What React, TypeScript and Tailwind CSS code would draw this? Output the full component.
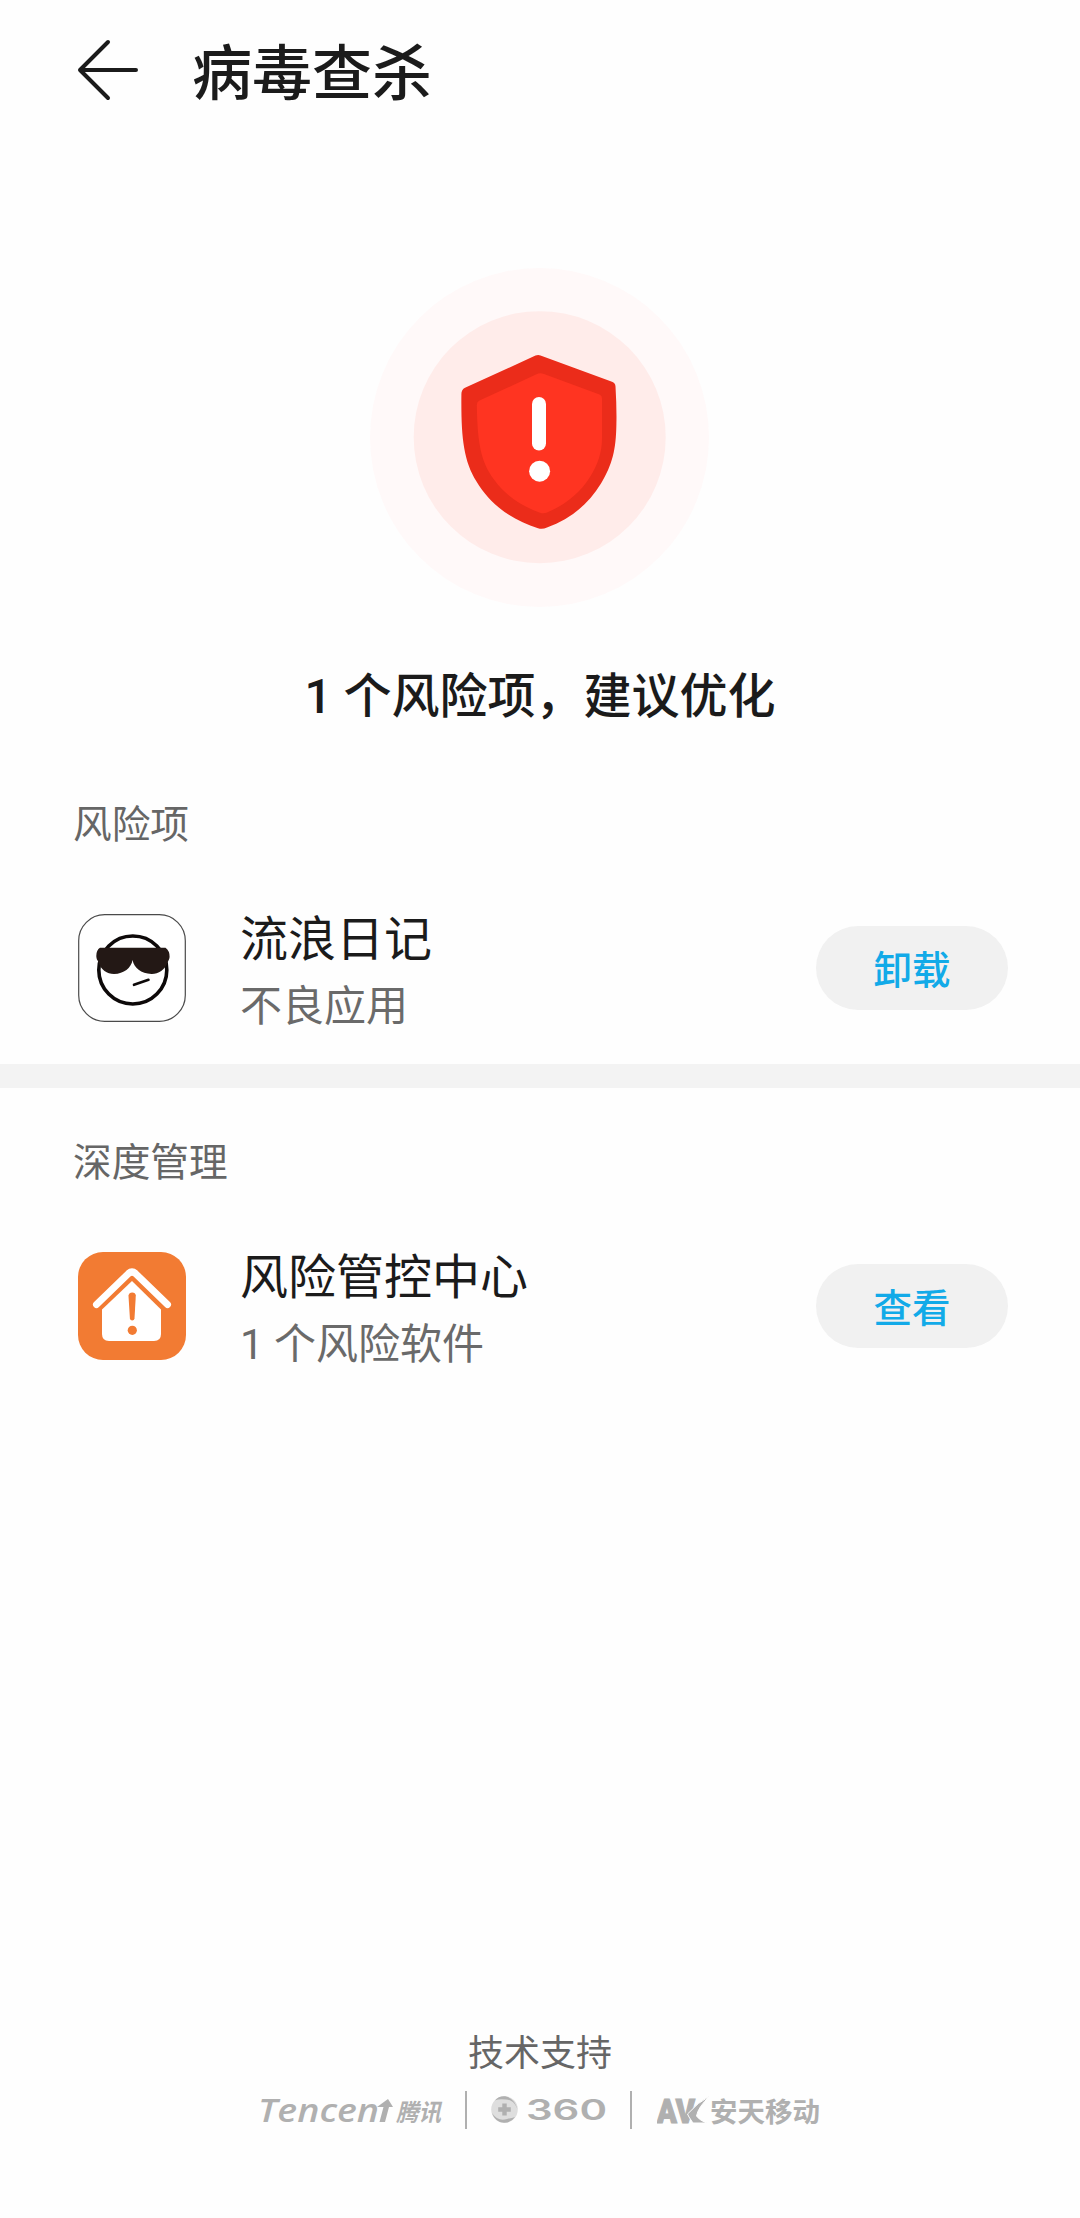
import type { ReactNode } from "react"

const FONT_STACK = "font-['Roboto','Noto_Sans_CJK_SC',sans-serif]"

function BackIcon() {
  return (
    <svg width="64" height="64" viewBox="0 0 64 64" fill="none" className="text-[#1b1b1b]">
      <path
        d="M32 4L4 32l28 28M4 32h56"
        stroke="currentColor"
        strokeWidth="4"
        strokeLinecap="round"
        strokeLinejoin="round"
      />
    </svg>
  )
}

function RiskShield() {
  return (
    <svg width="360" height="360" viewBox="0 0 360 360">
      <circle cx="179.5" cy="177.5" r="169.5" fill="#fff9f9" />
      <circle cx="179.7" cy="177.2" r="126" fill="#ffecea" />
      <path
        d="M175.5 95.6Q178 94.4 180.5 95.4L252 121.8Q255.3 123 255.5 126.5Q256.8 148 256.4 164C256 190 252.5 204 241 223.5C228 245 210 259 187 267.5Q182.5 269.5 178 268.2C154 261 131 246 116.5 221.5C103 200 101 175 101.4 134Q101.4 129.5 105 127.8Z"
        fill="#eb2c1a"
      />
      <path
        d="M176.5 114.2Q180 112.6 184 114L239.5 134.5Q242 135.6 242 138.5V178C242 192 238 204 230 217C220 233 205 245 187 252.5Q183.5 254 180 252.7C161 246 145 235 134 219.5C121 202 117.5 184 116.8 145Q116.8 141.8 119.5 140.6Z"
        fill="#ff3421"
      />
      <rect x="172" y="137" width="14" height="53.5" rx="7" fill="#fff" />
      <circle cx="179.6" cy="211.2" r="10.5" fill="#fff" />
    </svg>
  )
}

function SunglassesIcon() {
  return (
    <svg width="108" height="108" viewBox="0 0 108 108">
      <rect x="0.7" y="0.7" width="106.6" height="106.6" rx="26" fill="#fff" stroke="#4a4a4a" strokeWidth="1.2" />
      <circle cx="54.8" cy="56" r="34" fill="#fff" stroke="#0d0909" strokeWidth="3.6" />
      <path
        d="M22 33.8H87.5Q91.8 37 91.6 43C91.3 46 90.3 46.5 89.8 48C87 56 80 60.2 73.5 60C63 59.5 56 54 54.6 46C53 54 46 59.8 36 60C29 60 23 56 20.3 48C19.7 46 18.5 46 18.3 42Q18.3 36 22 33.8Z"
        fill="#231815"
      />
      <path d="M56 70.8L70.5 65.8" stroke="#0d0909" strokeWidth="2.6" strokeLinecap="round" />
    </svg>
  )
}

function HouseAlertIcon() {
  return (
    <svg width="108" height="108" viewBox="0 0 108 108">
      <rect width="108" height="108" rx="25" fill="#f27b33" />
      <path
        d="M18.5 52.5L50.5 21.5Q54 18.5 57.5 21.5L89.5 52.5"
        fill="none"
        stroke="#fff"
        strokeWidth="7"
        strokeLinecap="round"
      />
      <path d="M54 29L83 57.5V82Q83 89 76 89H31Q24 89 24 82V57.5Z" fill="#fff" />
      <path d="M50.5 43.5Q51 40.5 54.2 40.5Q57.5 40.5 57.8 43.5L56.5 66.5Q56.2 68.5 54.2 68.5Q52.2 68.5 51.9 66.5Z" fill="#f27b33" />
      <circle cx="54.3" cy="78.3" r="4.6" fill="#f27b33" />
    </svg>
  )
}

function TencentLogo() {
  return (
    <svg width="196" height="58" viewBox="-2 -10 196 58" fill="#b0b0b0">
      <text
        x="0"
        y="31"
        textLength="121"
        lengthAdjust="spacingAndGlyphs"
        className="font-['Open_Sans',sans-serif] text-[32px] font-semibold italic"
      >
        Tencen
      </text>
      <path d="M121.5 31L125.5 16H119L130 8L135 16H131L127 31Z" />
      <text
        x="138"
        y="29.5"
        textLength="45"
        lengthAdjust="spacingAndGlyphs"
        className="font-['Noto_Sans_CJK_SC',sans-serif] text-[24px] font-bold italic"
      >
        腾讯
      </text>
    </svg>
  )
}

function Logo360() {
  return (
    <svg width="120" height="58" viewBox="0 -10 120 58" fill="#b0b0b0">
      <circle cx="13.5" cy="18.5" r="13.3" fill="#dedede" />
      <path d="M4 9.5C9 3 22 3 26.5 18C23 10 19 9 15 8.5Q8 7.5 4 9.5Z" />
      <path d="M1 22Q7 31 16 28Q21 27 24 26Q20 32 13 31.8Q4 31 1 22Z" />
      <path d="M11.3 12.5H15.7V16.3H19.8V20.7H15.7V24.5H11.3V20.7H7.2V16.3H11.3Z" />
      <text
        x="35"
        y="29"
        textLength="81"
        lengthAdjust="spacingAndGlyphs"
        className="font-['Inter',sans-serif] text-[28px] font-semibold"
      >
        360
      </text>
    </svg>
  )
}

function AvlLogo() {
  return (
    <svg width="168" height="58" viewBox="0 -10 168 58" fill="#b0b0b0">
      <text
        x="0"
        y="32"
        textLength="38"
        lengthAdjust="spacingAndGlyphs"
        stroke="#b0b0b0"
        strokeWidth="1.2"
        className="font-['Roboto',sans-serif] text-[33px] font-black"
      >
        AV
      </text>
      <path
        d="M53 5Q41 11 30.5 23L32 26L36 32H49.5Q42 29 39.5 25Q41 16 53 5Z"
        stroke="#fefefe"
        strokeWidth="1"
      />
      <text
        x="53"
        y="31"
        textLength="110"
        lengthAdjust="spacingAndGlyphs"
        className="font-['Noto_Sans_CJK_SC',sans-serif] text-[27px] font-bold"
      >
        安天移动
      </text>
    </svg>
  )
}

type RiskItemProps = {
  icon: ReactNode
  title: string
  description: string
  action: string
}

function RiskItem({ icon, title, description, action }: RiskItemProps) {
  return (
    <div className="flex h-[144px] items-center pr-[72px] pl-[78px]">
      {icon}
      <div className="ml-[54px] flex-1 pt-[6px]">
        <p className="text-[48px] leading-[72px] text-[#1b1b1b]">{title}</p>
        <p className="text-[42px] leading-[62px] text-[#6a6a6a]">{description}</p>
      </div>
      <button className="h-[84px] w-[192px] rounded-full bg-[#f1f1f1] pt-[5px] text-[38.5px] font-medium text-[#12aae8]">
        {action}
      </button>
    </div>
  )
}

function SectionTitle({ children }: { children: ReactNode }) {
  return <h2 className="px-[73px] text-[38.7px] leading-[60px] text-[#666]">{children}</h2>
}

export default function App() {
  return (
    <div className={`flex h-[2218px] w-[1080px] flex-col bg-[#fefefe] ${FONT_STACK}`}>
      <header className="flex h-[140px] items-center gap-[52px] pl-[76px]">
        <BackIcon />
        <h1 className="pt-[9px] text-[60px] leading-[90px] font-medium text-[#1b1b1b]">病毒查杀</h1>
      </header>

      <section className="flex flex-col items-center pt-[120px]">
        <RiskShield />
        <p className="mt-[42px] text-[48px] leading-[70px] font-medium text-[#1b1b1b]">
          1 个风险项，建议优化
        </p>
      </section>

      <section className="h-[332px] pt-[63px]">
        <SectionTitle>风险项</SectionTitle>
        <div className="mt-[41px]">
          <RiskItem icon={<SunglassesIcon />} title="流浪日记" description="不良应用" action="卸载" />
        </div>
      </section>

      <div className="h-6 bg-[#f3f3f3]" />

      <section className="pt-[45px]">
        <SectionTitle>深度管理</SectionTitle>
        <div className="mt-[41px]">
          <RiskItem icon={<HouseAlertIcon />} title="风险管控中心" description="1 个风险软件" action="查看" />
        </div>
      </section>

      <footer className="mt-auto flex flex-col items-center pb-[79px]">
        <p className="text-[36px] leading-[54px] text-[#666]">技术支持</p>
        <div className="flex items-center">
          <TencentLogo />
          <span className="ml-[13px] h-[38px] w-[2px] bg-[#b0b0b0]" />
          <span className="ml-[24px]">
            <Logo360 />
          </span>
          <span className="ml-[19px] h-[38px] w-[2px] bg-[#b0b0b0]" />
          <span className="ml-[25px]">
            <AvlLogo />
          </span>
        </div>
      </footer>
    </div>
  )
}
